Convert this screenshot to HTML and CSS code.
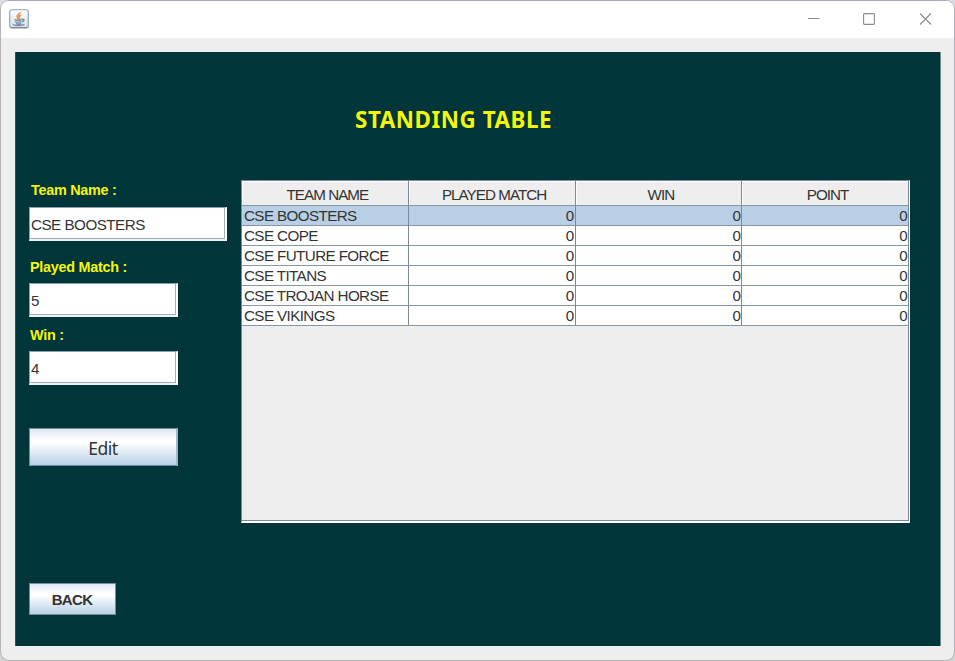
FILE: index.html
```
<!DOCTYPE html>
<html lang="en">
<head>
<meta charset="utf-8">
<title>Standing Table</title>
<link rel="stylesheet" href="styles.css">
</head>
<body>
<div class="window">
  <header class="titlebar">
    <svg class="app-icon" width="20" height="20" viewBox="0 0 20 20">
      <defs><linearGradient id="tile" x2="0" y2="1"><stop offset="0" stop-color="#fff"/><stop offset="1" stop-color="#d9dfe4"/></linearGradient></defs>
      <rect x=".75" y=".75" width="18.5" height="18.2" rx="2" fill="url(#tile)" stroke="#8fa5b8" stroke-width="1.2"/>
      <path d="M2 18.6H18" stroke="#70879a" stroke-width="1"/>
      <path d="M11 3.2C11.5 5.2 7 6 8.3 8C8.8 9 9.8 9.7 9.5 10.7M12.2 6.2C9.8 7 9.5 8 10.5 9.2C10.9 9.8 10.6 10.3 10.1 10.8" fill="none" stroke="#ee924c" stroke-width="1.7"/>
      <path d="M5.5 10.6C6.5 11.5 11 11.4 13 10.7M6 12.6C7.5 13.4 11 13.3 12.5 12.6M13 10.2C15.8 9.8 15.4 12.3 13.2 12.8M4.5 15.2C3.5 17 14.2 16.8 15.2 15.2M7 14.7C8.5 15.2 11 15.1 12.3 14.7" fill="none" stroke="#718ca5" stroke-width="1.4"/>
    </svg>
    <svg class="controls" width="124" height="14" viewBox="0 0 124 14" fill="none" stroke="#8b8b8b" stroke-width="1.1">
      <path d="M0 6.5H11.5"/>
      <rect x="55.6" y="1.6" width="10.8" height="10.8" rx="1"/>
      <path d="M112 1.5L123 12.5M123 1.5L112 12.5"/>
    </svg>
  </header>
  <main class="panel">
    <h1 class="heading"><span>STANDING TABLE</span></h1>
    <div class="content">
      <form class="form">
        <label class="label first" for="team">Team Name :</label>
        <input class="field team" id="team" value="CSE BOOSTERS">
        <label class="label" for="played">Played Match :</label>
        <input class="field played" id="played" value="5">
        <label class="label" for="win">Win :</label>
        <input class="field win" id="win" value="4">
        <button class="button edit" type="button">Edit</button>
      </form>
      <div class="table-pane">
        <table class="table">
          <thead><tr><th>TEAM NAME</th><th>PLAYED MATCH</th><th>WIN</th><th>POINT</th></tr></thead>
          <tbody>
            <tr class="selected"><td>CSE BOOSTERS</td><td>0</td><td>0</td><td>0</td></tr>
            <tr><td>CSE COPE</td><td>0</td><td>0</td><td>0</td></tr>
            <tr><td>CSE FUTURE FORCE</td><td>0</td><td>0</td><td>0</td></tr>
            <tr><td>CSE TITANS</td><td>0</td><td>0</td><td>0</td></tr>
            <tr><td>CSE TROJAN HORSE</td><td>0</td><td>0</td><td>0</td></tr>
            <tr><td>CSE VIKINGS</td><td>0</td><td>0</td><td>0</td></tr>
          </tbody>
        </table>
      </div>
    </div>
    <button class="button back" type="button">BACK</button>
  </main>
</div>
</body>
</html>
```
FILE: styles.css
```
* { box-sizing: border-box; }
body {
  margin: 0;
  height: 661px;
  overflow: hidden;
  background: linear-gradient(#dcdce2 0 15px, #2f4d57 15px 588px, #4a86bd 588px 591px, #d5d5d5 591px);
  font-family: "Liberation Sans", Arial, sans-serif;
  color: #333;
}
.window {
  height: 661px;
  border: 1px solid #b4b4b8;
  border-top-color: #aaa7b8;
  border-radius: 9px;
  background: #eee;
  overflow: hidden;
}
.titlebar {
  display: flex;
  justify-content: space-between;
  height: 37px;
  padding: 8px 22px 0 8px;
  background: #fff;
}
.controls { margin-top: 3px; }
.panel {
  width: 926px;
  height: 594px;
  margin: 14px 0 0 14px;
  padding-left: 13px;
  background: #003639;
  border-left: 1px solid #285458;
  border-right: 1px solid #6d8b8d;
}
.heading {
  height: 128px;
  margin: 0;
  padding: 52px 0 0 326px;
  color: #f5f50a;
  font: bold 22.4px/32px "Noto Sans", sans-serif;
  letter-spacing: 0.55px;
  white-space: nowrap;
}
.content { display: flex; height: 403px; }
.form { display: flex; flex-direction: column; align-items: flex-start; width: 212px; }
.label {
  height: 17px;
  margin: 10px 0 0 1px;
  color: #f5f50a;
  font: bold 14.4px/17px "Liberation Sans", Arial, sans-serif;
  letter-spacing: -0.27px;
}
.label.first { margin: 2px 0 0 2px; }
.field {
  width: 149px;
  height: 34px;
  margin: 7px 0 0;
  padding: 1px 0 0 1px;
  border: 1px solid #8da0b2;
  border-right: 2px solid #fff;
  border-bottom: 2px solid #eef2f4;
  border-radius: 0;
  box-shadow: inset -1px -1px #9fb0bd;
  background: #fff;
  color: #333;
  font: 15.2px "Liberation Sans", Arial, sans-serif;
  letter-spacing: -0.5px;
}
.team { width: 198px; margin-top: 8px; }
.team + .label { margin-top: 18px; }
.button {
  padding: 0;
  border: 1px solid #778b9f;
  border-radius: 0;
  background: linear-gradient(#dde7f2, #fff 31%, #fff 38%, #b8cfe5);
  color: #333;
}
.edit {
  width: 149px;
  height: 38px;
  margin-top: 43px;
  padding-top: 1px;
  border-right: 2px solid #a3b8c8;
  font: 17.5px/34px "Noto Sans", sans-serif;
  letter-spacing: -0.5px;
}
.back {
  display: block;
  width: 87px;
  height: 32px;
  padding: 1px 1px 0 0;
  font: bold 15px/30px "Liberation Sans", Arial, sans-serif;
  letter-spacing: -0.7px;
}
.table-pane {
  width: 669px;
  height: 343px;
  border: 1px solid #7a8a99;
  border-right: 1px solid #fff;
  border-bottom: 2px solid #fff;
  box-shadow: inset -1px -1px #7a8a99;
  background: #eee;
}
.table {
  width: 667px;
  table-layout: fixed;
  border-collapse: separate;
  border-spacing: 0;
  font-size: 15.2px;
}
th, td { border-right: 1px solid #7a8a99; border-bottom: 1px solid #8796a5; }
th {
  height: 25px;
  padding: 3px 0 0 5px;
  font-weight: normal;
  line-height: 20px;
  letter-spacing: -0.95px;
  box-shadow: inset 1px 1px #fff;
}
td {
  height: 20px;
  padding: 0 1px 0 2px;
  line-height: 18px;
  letter-spacing: -0.6px;
  text-align: right;
  background: #fff;
}
td:first-child { text-align: left; }
.selected td { background: #b8cfe5; }
```
